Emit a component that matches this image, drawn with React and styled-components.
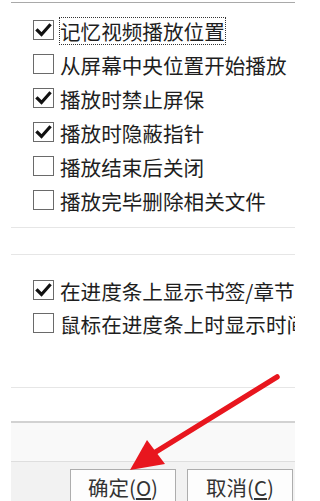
import React from 'react'
import styled, { createGlobalStyle } from 'styled-components'

const GlobalStyle = createGlobalStyle`
  html, body {
    margin: 0;
    padding: 0;
    background: #fff;
  }
  body {
    font-family: "Noto Sans CJK SC", "Noto Sans", sans-serif;
    color: #1e1e1e;
  }
`

const topOptions = [
    { label: '记忆视频播放位置', checked: true, focused: true },
    { label: '从屏幕中央位置开始播放', checked: false },
    { label: '播放时禁止屏保', checked: true },
    { label: '播放时隐蔽指针', checked: true },
    { label: '播放结束后关闭', checked: false },
    { label: '播放完毕删除相关文件', checked: false },
]

const barOptions = [
    { label: '在进度条上显示书签/章节', checked: true },
    { label: '鼠标在进度条上时显示时间', checked: false },
]

const Check = ({ checked }) => (
    <Box>
        {checked && (
            <svg width="21" height="20" viewBox="0 0 21 20">
                <path d="M4.5 10.5 L8.5 14.5 L16.5 5.5" fill="none" stroke="#111" strokeWidth="3.2" strokeLinecap="square" />
            </svg>
        )}
    </Box>
)

const Option = ({ label, checked, focused, tall }) => (
    <Row tall={tall}>
        <Check checked={checked} />
        <Label focused={focused}>{label}</Label>
    </Row>
)

const App = () => {
    return (
        <Page>
            <GlobalStyle />
            <Panel>
                <Group top={11} bottom={9}>
                    {topOptions.map(o => <Option key={o.label} {...o} tall />)}
                </Group>
                <Rule gap={26} />
                <Group top={19} bottom={47} lined>
                    {barOptions.map(o => <Option key={o.label} {...o} />)}
                </Group>
                <Rule gap={33} />
                <Footer>
                    <FooterBand />
                    <ButtonBar>
                        <Button>确定(<u>O</u>)</Button>
                        <Button>取消(<u>C</u>)</Button>
                    </ButtonBar>
                </Footer>
            </Panel>
            <Arrow width="295" height="501" viewBox="0 0 295 501">
                <line x1="277" y1="377" x2="154" y2="453" stroke="#e8161e" strokeWidth="5.5" strokeLinecap="round" />
                <polygon points="130,470 147,440 165,464" fill="#e8161e" />
            </Arrow>
        </Page>
    )
}

const Page = styled.div`
    position: relative;
    width: 295px;
    height: 501px;
    overflow: hidden;
    padding: 2px 0 0 11px;
    box-sizing: border-box;
`
const Panel = styled.div`
    border-top: 1px solid #a9a9a9;
    display: flex;
    flex-direction: column;
`
const Group = styled.div`
    padding: ${p => p.top}px 0 ${p => p.bottom}px 22px;
    display: flex;
    flex-direction: column;
    border-top: ${p => p.lined ? '1px solid #e6e6e6' : 'none'};
`
const Rule = styled.div`
    height: ${p => p.gap}px;
    border-top: 1px solid #e6e6e6;
`
const Row = styled.div`
    height: ${p => p.tall ? 34 : 33}px;
    display: flex;
    align-items: center;
    white-space: nowrap;
`
const Box = styled.span`
    flex: none;
    width: 21px;
    height: 20px;
    box-sizing: border-box;
    border: 1.5px solid #6a6a6a;
    background: #fff;
    display: flex;
    align-items: center;
    justify-content: center;
    margin-top: -2px;

    svg {
        margin: -1.5px;
    }
`
const Label = styled.span`
    margin-left: 5px;
    font-size: 20.6px;
    line-height: 26px;
    border: 1px dotted ${p => p.focused ? '#333' : 'transparent'};
    padding: 0;
`
const Footer = styled.div`
    border-top: 2px solid #d2d2d2;
    display: flex;
    flex-direction: column;
`
const FooterBand = styled.div`
    height: 38px;
    background: #f9f9f9;
    border-bottom: 1px solid #dedede;
`
const ButtonBar = styled.div`
    background: #f2f2f2;
    display: flex;
    justify-content: flex-end;
    gap: 11px;
    padding: 7px 2px 10px 0;
`
const Button = styled.div`
    width: 106px;
    height: 36px;
    box-sizing: border-box;
    border: 1px solid #adadad;
    background: #fdfdfd;
    display: flex;
    align-items: center;
    justify-content: center;
    font-size: 20.5px;
    color: #333;

    u {
        text-underline-offset: 2px;
    }
`
const Arrow = styled.svg`
    position: absolute;
    left: 0;
    top: 0;
    pointer-events: none;
`

export default App
